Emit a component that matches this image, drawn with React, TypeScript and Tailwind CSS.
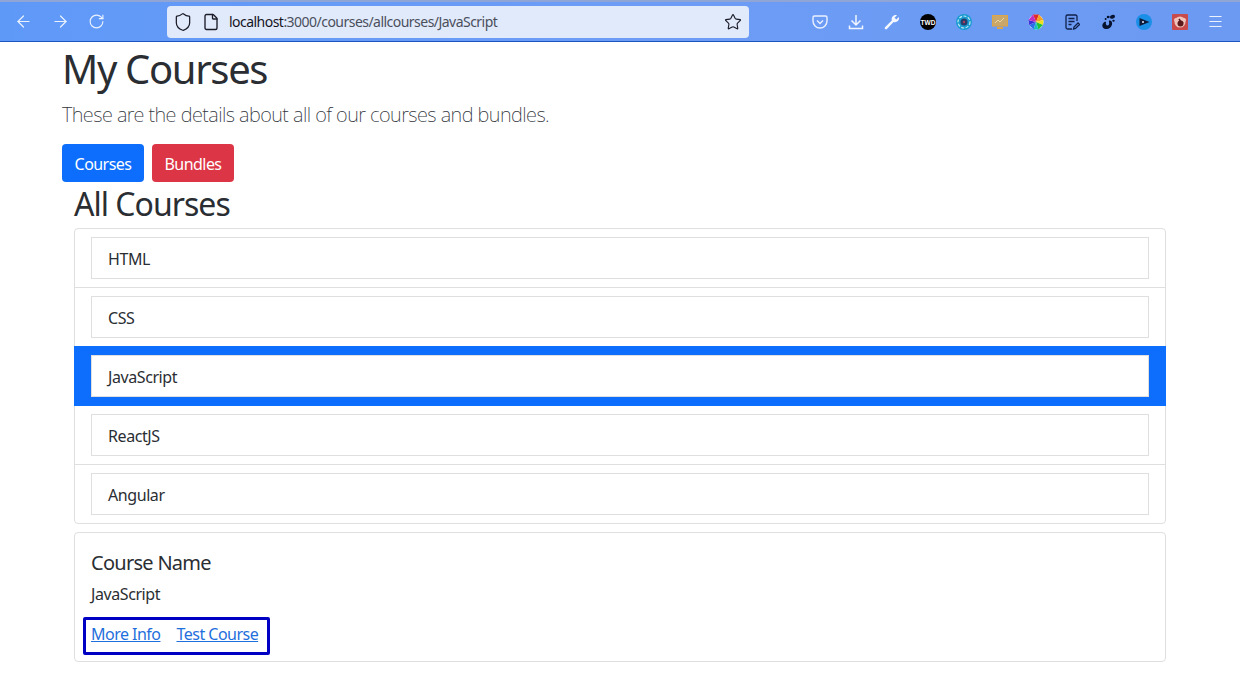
import { ArrowLeft, ArrowRight, RotateCw, Shield, File, Star, Menu } from "lucide-react";

const font = { fontFamily: '"Noto Sans", "Open Sans", sans-serif' };

function Row({ label, active, last }: { label: string; active?: boolean; last?: boolean }) {
  const outer = active
    ? "-mx-px -mt-px px-[17px] py-[9px] bg-[#0d6efd]"
    : last
      ? "px-4 py-2"
      : "px-4 py-2 border-b border-[#dfdfdf]";
  return (
    <div className={outer}>
      <div className="h-[42px] flex items-center px-4 pt-[2px] border border-[#dfdfdf] bg-white text-[16px] tracking-[-0.42px] text-[#2a2e33]">
        {label}
      </div>
    </div>
  );
}

function Toolbar() {
  return (
    <div className="h-[42px] flex items-center border-b border-b-[#1a55c0] bg-gradient-to-r from-[#5f99f8] via-[#6c9cf6] to-[#6c9af2] border-t-2 border-t-[#8ea5d6]">
      <div className="w-[167px] pl-[14px] flex items-center gap-[18px] text-[#eaf1ff]">
        <ArrowLeft size={19} strokeWidth={1.5} />
        <ArrowRight size={19} strokeWidth={1.5} />
        <RotateCw size={17} strokeWidth={1.6} />
      </div>
      <div className="w-[582px] h-[32px] flex items-center rounded-[4px] bg-[#e1eafb] pl-[6px] pr-[7px]">
        <Shield size={20} strokeWidth={1.5} className="text-[#1c1c28]" />
        <File size={18} strokeWidth={1.8} className="ml-[9px] text-[#1c1c28]" />
        <span className="ml-[9px] text-[14px] tracking-[-0.53px] text-[#4a4f5c]">
          <span className="text-[#15151f]">localhost</span>:3000/courses/allcourses/JavaScript
        </span>
        <Star size={18} strokeWidth={1.5} className="ml-auto text-[#1c1c28]" />
      </div>
      <div className="ml-[63px] flex items-center gap-[20px]">
        <svg width="16" height="16" viewBox="0 0 16 16" fill="none" stroke="#eaf1ff" strokeWidth="1.4">
          <path d="M2.500 2h11a1.500 1.500 0 0 1 1.500 1.500V7a7 7 0 0 1-14 0V3.500A1.500 1.500 0 0 1 2.500 2z" />
          <path d="M5 6.500l3 3 3-3" />
        </svg>
        <svg width="16" height="16" viewBox="0 0 16 16" fill="none" stroke="#f0f5ff" strokeWidth="1.500">
          <path d="M8 1v10M3.500 6.500L8 11l4.500-4.500" />
          <path d="M1.500 11.500v3h13v-3" />
        </svg>
        <svg width="16" height="16" viewBox="0 0 16 16" fill="#f4f7ff">
          <path d="M1 13.200L7.800 6.500C7.200 4.400 8 2.500 9.800 1.500 10.800 1 12 .9 13 1.200L10.500 3.700l1.800 1.900 2.600-2.500c.4 1.300.1 2.600-.8 3.700-1.200 1.300-2.900 1.700-4.500 1.100L2.900 15c-.5.500-1.200.5-1.700.1-.6-.6-.6-1.400-.2-1.900z" />
        </svg>
        <svg width="16" height="16" viewBox="0 0 16 16">
          <circle cx="8" cy="8" r="8" fill="#000" />
          <text x="8" y="10.500" textAnchor="middle" fontSize="6.500" fontWeight="700" fill="#fff" fontFamily="Liberation Sans">TWD</text>
        </svg>
        <svg width="16" height="16" viewBox="0 0 16 16" fill="none">
          <circle cx="8" cy="8" r="8" fill="#1a9bd0" />
          <circle cx="8" cy="8" r="6" fill="none" stroke="#bfeaf5" strokeWidth="1.200" strokeDasharray="3 1.500" />
          <circle cx="8" cy="8" r="3.500" fill="#23406e" />
          <circle cx="8" cy="8" r="1.200" fill="#b0405a" />
        </svg>
        <svg width="16" height="16" viewBox="0 0 16 16" fill="none">
          <rect x="0.500" y="1.500" width="15" height="10.500" fill="#c9a66a" stroke="#dba548" />
          <path d="M3 9l3-3 2 2 4-4" stroke="#e9d9a8" strokeWidth="1" />
          <path d="M5 14h6" stroke="#dba548" strokeWidth="2" />
        </svg>
        <svg width="16" height="16" viewBox="0 0 16 16">
          <circle cx="8" cy="8" r="7.500" fill="#fff" />
          <path d="M8 8L5 0.500h6z" fill="#e02a2a" />
          <path d="M8 8L11 0.500L15.500 6z" fill="#f5a020" />
          <path d="M8 8L15.500 6L15 11z" fill="#f0e020" />
          <path d="M8 8L15 11L10.500 15.500z" fill="#1fc03a" />
          <path d="M8 8L10.500 15.500h-5z" fill="#18c0c0" />
          <path d="M8 8L5.500 15.500L1 11z" fill="#2a70e8" />
          <path d="M8 8L1 11L.5 6z" fill="#3a30d8" />
          <path d="M8 8L.5 6L5 .5z" fill="#c030c0" />
        </svg>
        <svg width="16" height="16" viewBox="0 0 16 16" fill="none" stroke="#10204a" strokeWidth="1.300">
          <path d="M13 7V2.500A1.500 1.500 0 0 0 11.500 1h-8A1.500 1.500 0 0 0 2 2.500v11A1.500 1.500 0 0 0 3.500 15H8" />
          <path d="M4.500 4.500h6M4.500 7.500h6M4.500 10.500h3" />
          <path d="M9.500 15l.5-2 4-4 1.500 1.500-4 4z" />
        </svg>
        <svg width="16" height="16" viewBox="0 0 16 16" fill="#06122e">
          <path d="M9 6.500C11.500 6 12.500 8 12 10.500 11.500 13.500 8.500 15.500 5.500 15 2.500 14.500 1.500 11.500 3 9.500 4 8 5 7.500 6 8c-.5 1.500 0 3.500 1.500 3.500 1.500 0 2-2 1.500-3.500z" />
          <ellipse cx="12.500" cy="2.800" rx="2.600" ry="1.800" transform="rotate(-20 12.500 2.800)" />
          <ellipse cx="8.200" cy="3" rx="1.500" ry="1.300" />
          <ellipse cx="5.600" cy="5" rx="1" ry="1" />
          <ellipse cx="13.500" cy="6.800" rx="1.200" ry="1" />
        </svg>
        <svg width="16" height="16" viewBox="0 0 16 16">
          <circle cx="8" cy="8" r="8" fill="#1a8fe8" />
          <path d="M3.500 4l10 4-10 4z" fill="#0c1c3a" />
          <circle cx="7" cy="8" r="1" fill="#dfe9ff" />
        </svg>
        <svg width="16" height="16" viewBox="0 0 16 16">
          <rect width="16" height="16" rx="1" fill="#c94a4a" />
          <circle cx="8" cy="8" r="5.500" fill="#f0c4bc" />
          <circle cx="4" cy="6" r="2" fill="#f0c4bc" />
          <circle cx="12" cy="6" r="2" fill="#f0c4bc" />
          <circle cx="8.500" cy="9.500" r="3" fill="#5c1a1a" />
          <path d="M7 5l2 3M11 8l-2 2" stroke="#5c1a1a" strokeWidth="1.500" />
        </svg>
        <Menu size={17} strokeWidth={1.4} className="text-[#f0f5ff] -ml-[1px]" />
      </div>
    </div>
  );
}

export default function App() {
  return (
    <div style={font} className="w-[1240px] h-[698px] overflow-hidden bg-white text-[#2a2e33]">
      <Toolbar />
      <div className="pl-[62px] pr-[74px]">
        <h1 className="text-[40px] leading-[48px] mt-[3px] tracking-[-1.35px] font-normal">My Courses</h1>
        <p className="text-[20px] leading-[30px] mt-[7px] font-extralight tracking-[-0.545px] text-[#30343a]">
          These are the details about all of our courses and bundles.
        </p>
        <div className="flex gap-2 mt-[14px]">
          <button className="w-[82px] h-[38px] pt-[2px] rounded-[4px] bg-[#0d6efd] text-white text-[16px] tracking-[-0.55px]">Courses</button>
          <button className="w-[82px] h-[38px] pt-[2px] rounded-[4px] bg-[#dc3545] text-white text-[16px] tracking-[-0.55px]">Bundles</button>
        </div>
        <div className="ml-[12px]">
          <h2 className="text-[32px] leading-[38px] mt-[3px] tracking-[-0.98px] font-normal">All Courses</h2>
          <div className="mt-[5px] border border-[#dfdfdf] rounded-[4px]">
            <Row label="HTML" />
            <Row label="CSS" />
            <Row label="JavaScript" active />
            <Row label="ReactJS" />
            <Row label="Angular" last />
          </div>
          <div className="relative mt-2 h-[130px] border border-[#dfdfdf] rounded-[4px] px-4 pt-4">
            <h5 className="text-[20px] leading-[28px] tracking-[-0.72px] font-normal">Course Name</h5>
            <p className="mt-[5px] text-[16px] leading-[24px] tracking-[-0.42px]">JavaScript</p>
            <div className="mt-[16px] flex gap-4 text-[16px] leading-[24px] tracking-[-0.52px] text-[#1f6fdc]">
              <a className="underline">More Info</a>
              <a className="underline">Test Course</a>
            </div>
            <div className="absolute left-[8px] top-[84px] w-[187px] h-[38px] border-[3px] border-[#0000c4] rounded-[2px]" />
          </div>
        </div>
      </div>
    </div>
  );
}
